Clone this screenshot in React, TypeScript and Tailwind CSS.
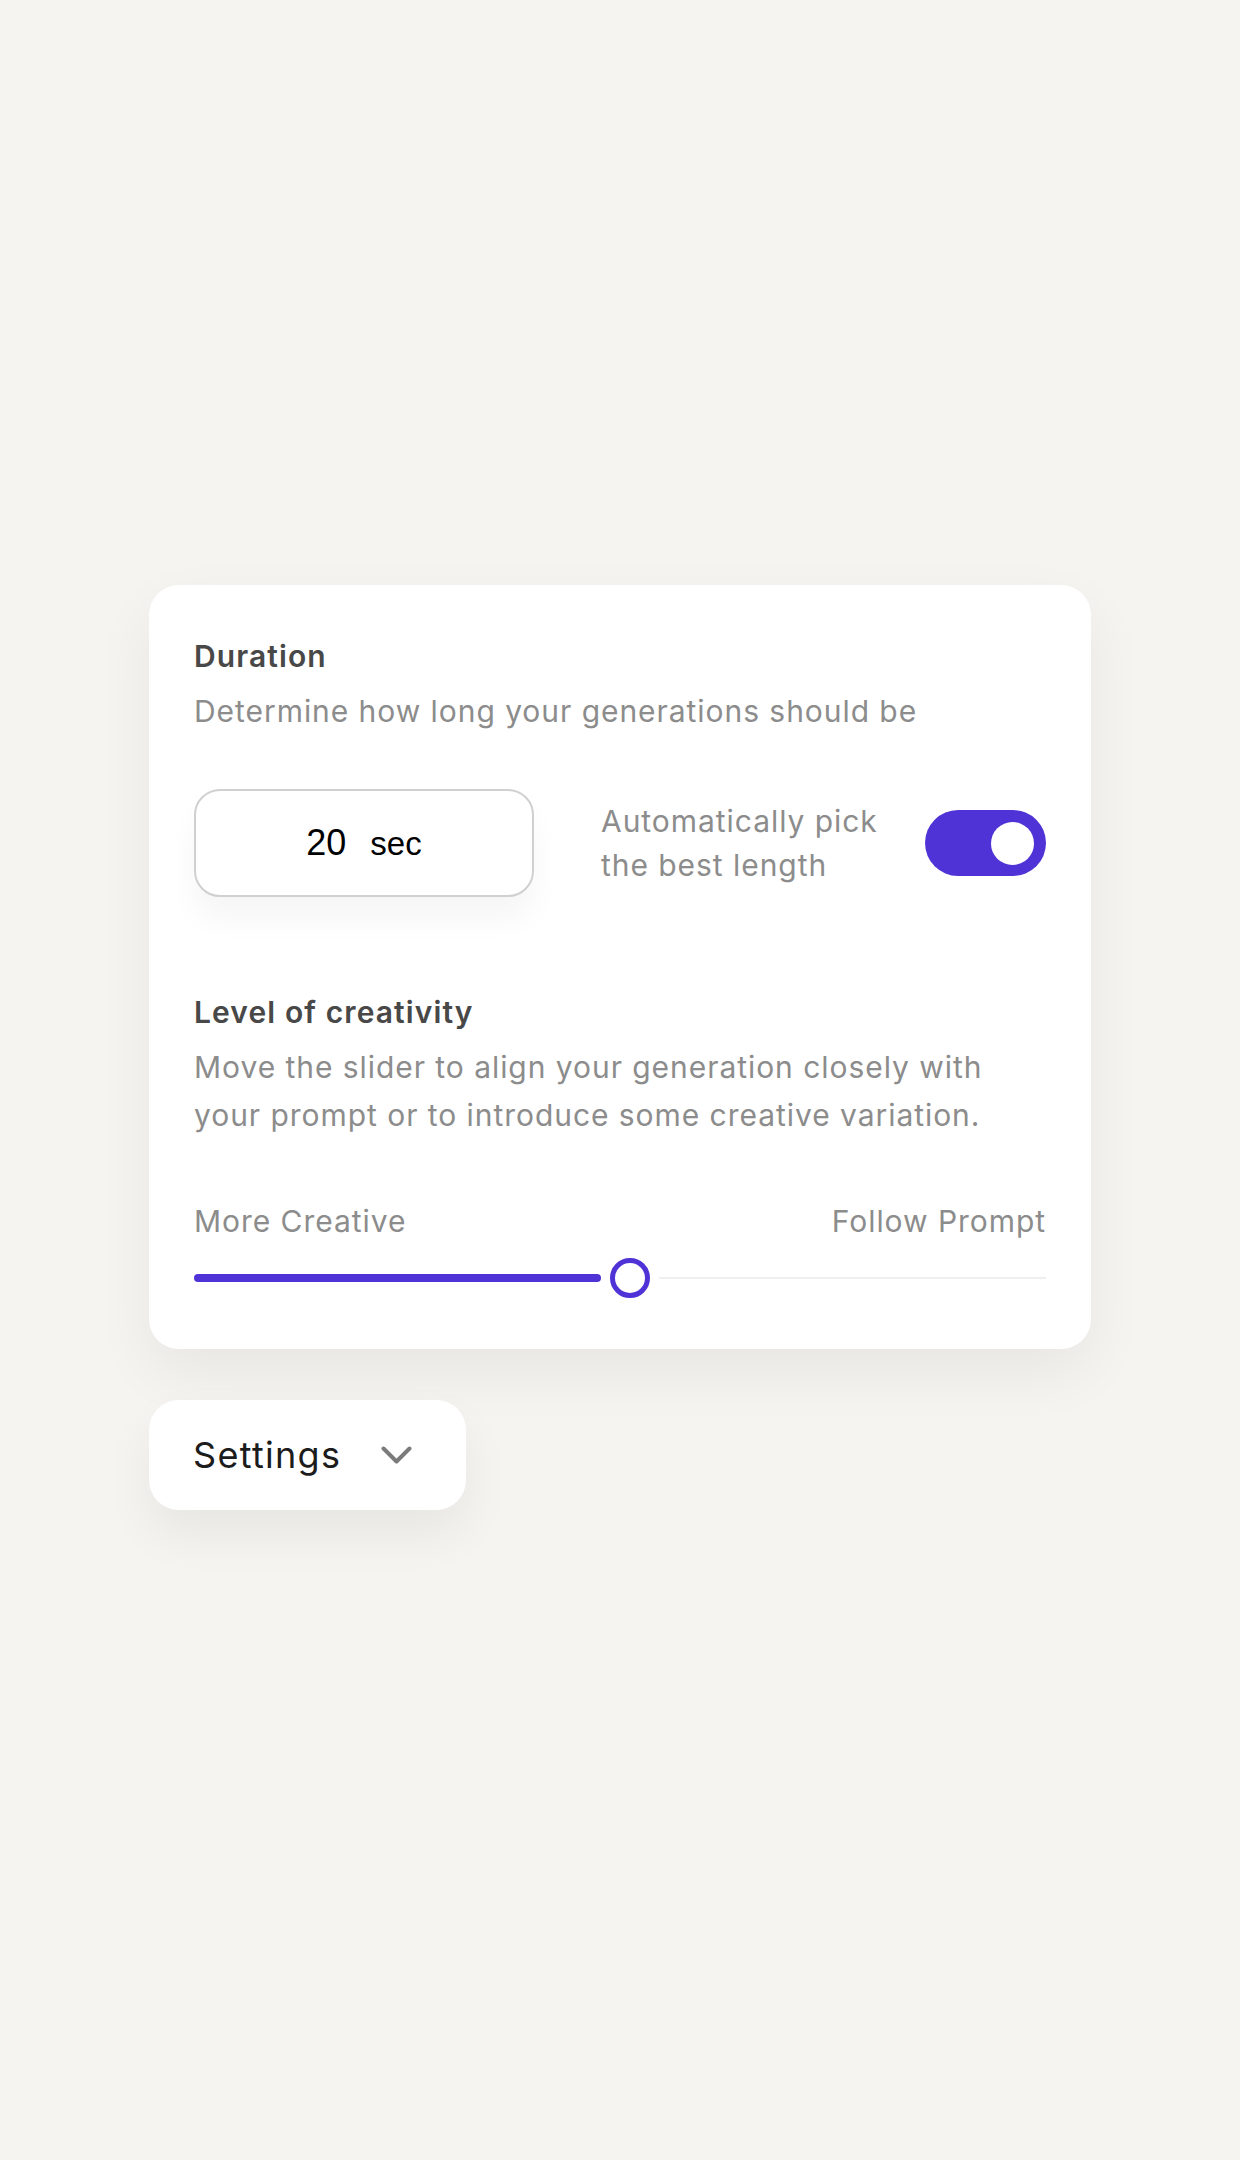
const sans = "font-['Inter','Noto_Sans',sans-serif]";

const App = () => {
  const value = 51.2; // slider position in percent

  return (
    <div className={`min-h-screen bg-[#f5f4f1] ${sans}`}>
      <div className="mx-auto flex w-[942px] flex-col items-start pt-[585px] pb-20">
        {/* Card */}
        <section className="w-full rounded-[30px] bg-white px-[45px] pt-[53px] pb-[51px] shadow-[0_24px_60px_rgba(0,0,0,0.06)]">
          {/* Duration */}
          <h2 className="text-[30px] leading-[36px] font-semibold tracking-[1.1px] text-[#484848]">Duration</h2>
          <p className="mt-[13px] max-w-[820px] text-[30px] leading-[48px] tracking-[0.95px] text-[#8c8c8c]">
            Determine how long your generations should be
          </p>

          <div className="mt-[54px] flex items-center">
            <div className="flex h-[108px] w-[340px] items-center justify-center gap-[24px] rounded-[26px] border-[2.5px] border-[#d0d0d0] bg-white shadow-[0_22px_30px_rgba(0,0,0,0.04)] font-['Liberation_Sans',Arial,sans-serif] text-black">
              <span className="text-[36px] leading-none">20</span>
              <span className="text-[33px] leading-none">sec</span>
            </div>
            <p className="ml-[67px] text-[30px] leading-[44px] tracking-[0.95px] text-[#8c8c8c]">
              Automatically pick
              <br />
              the best length
            </p>
            <button className="ml-auto flex h-[66px] w-[121px] items-center justify-end rounded-full bg-[#5033d6] pr-[12px]">
              <span className="h-[43px] w-[43px] rounded-full bg-white" />
            </button>
          </div>

          {/* Level of creativity */}
          <h2 className="mt-[97px] text-[30px] leading-[36px] font-semibold tracking-[1.1px] text-[#484848]">
            Level of creativity
          </h2>
          <p className="mt-[13px] max-w-[820px] text-[30px] leading-[48px] tracking-[0.95px] text-[#8c8c8c]">
            Move the slider to align your generation closely with your prompt or to introduce some creative variation.
          </p>

          <div className="mt-[64px] flex justify-between text-[30px] leading-[36px] tracking-[0.95px] text-[#8c8c8c]">
            <span>More Creative</span>
            <span>Follow Prompt</span>
          </div>

          <div className="relative mt-[19px] h-[40px]">
            <div className="absolute top-1/2 right-0 left-0 h-[2px] -translate-y-1/2 bg-[#efefef]" />
            <div
              className="absolute top-1/2 left-0 h-[8px] -translate-y-1/2 rounded-full bg-[#5033d6]"
              style={{ width: `calc(${value}% - 29px)` }}
            />
            <div
              className="absolute top-1/2 h-[20px] w-[58px] -translate-x-1/2 -translate-y-1/2 bg-white"
              style={{ left: `${value}%` }}
            />
            <div
              className="absolute top-1/2 h-[40px] w-[40px] -translate-x-1/2 -translate-y-1/2 rounded-full border-[5px] border-[#5033d6] bg-white"
              style={{ left: `${value}%` }}
            />
          </div>
        </section>

        {/* Settings dropdown */}
        <button className="mt-[51px] flex h-[110px] w-[317px] items-center rounded-[30px] bg-white pl-[44px] shadow-[0_24px_50px_rgba(0,0,0,0.06)]">
          <span className="text-[36px] leading-none tracking-[1.3px] text-[#1c1c1c]">Settings</span>
          <svg className="ml-[40px]" width="31" height="18" viewBox="0 0 31 18" fill="none">
            <polyline
              points="2.5,2.5 15.5,15.5 28.5,2.5"
              stroke="#7b7b7b"
              strokeWidth="4"
              strokeLinecap="round"
              strokeLinejoin="round"
            />
          </svg>
        </button>
      </div>
    </div>
  );
};

export default App;
